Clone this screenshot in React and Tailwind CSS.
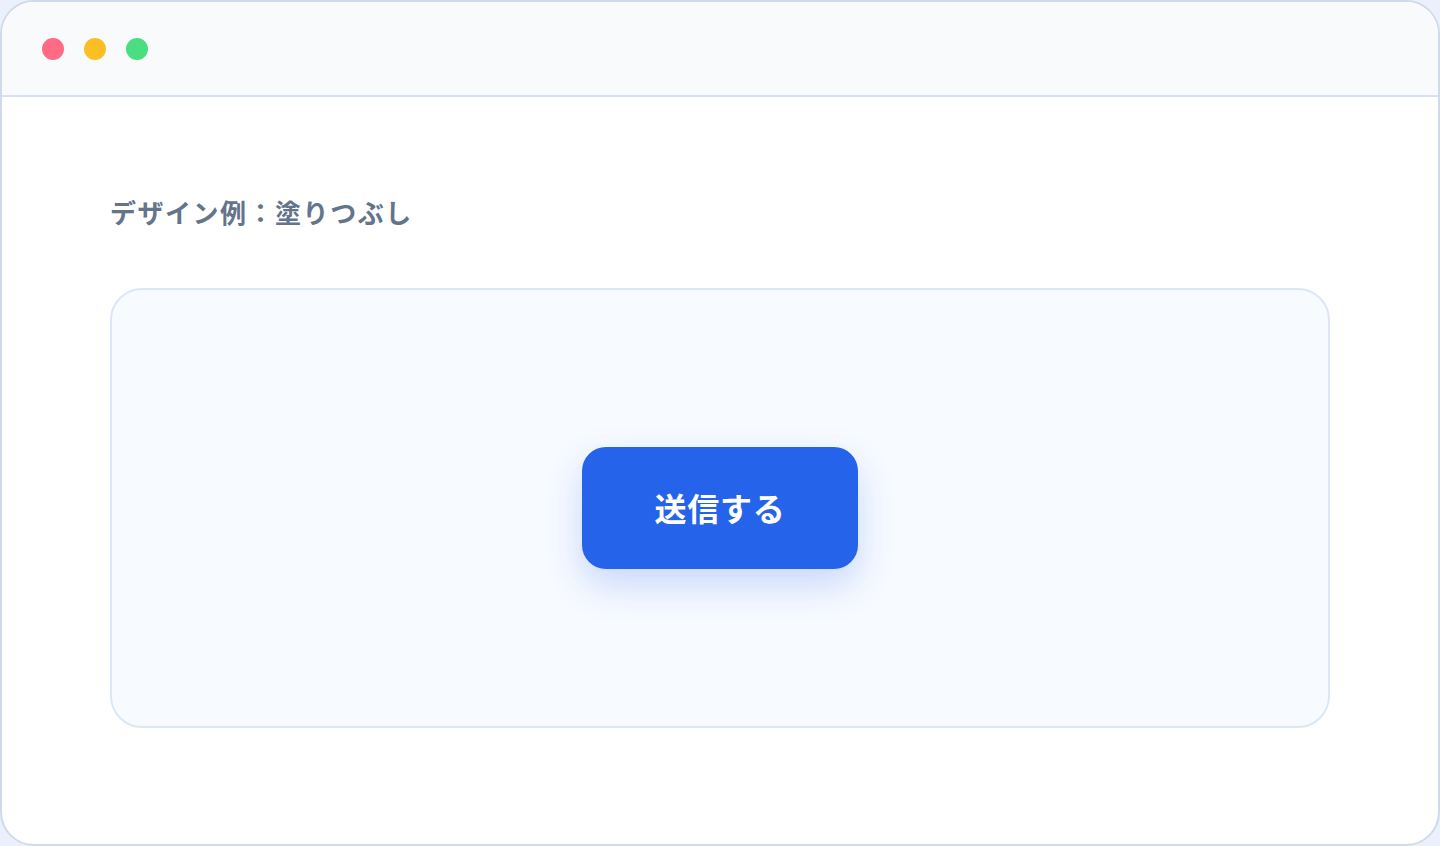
export default function App() {
  return (
    <div className="h-[846px] w-full bg-[#eaf1fd]" style={{ fontFamily: '"Noto Sans CJK JP", "Noto Sans", sans-serif' }}>
      <div className="flex h-full flex-col overflow-hidden rounded-[34px] border-2 border-[#cfdbea] bg-white">
        <div className="flex h-[95px] shrink-0 items-center gap-5 border-b-2 border-[#d6e2f0] bg-[#f8fafc] pl-[40px]">
          <span className="h-[22px] w-[22px] rounded-full bg-[#ff6b84]" />
          <span className="h-[22px] w-[22px] rounded-full bg-[#fbbf24]" />
          <span className="h-[22px] w-[22px] rounded-full bg-[#4ade80]" />
        </div>
        <div className="flex flex-col px-[108px] pt-[97px]">
          <h2 className="text-[26px] leading-[36px] font-bold tracking-[1.5px] text-[#64748b]">デザイン例：塗りつぶし</h2>
          <div className="mt-[58px] flex h-[440px] items-center justify-center rounded-[32px] border-2 border-[#dce7f5] bg-[#f7faff]">
            <button className="h-[122px] w-[276px] rounded-[24px] bg-[#2563eb] pb-[3px] text-[32px] font-bold tracking-wide text-white shadow-[0_16px_36px_rgba(37,99,235,0.22)]">
              送信する
            </button>
          </div>
        </div>
      </div>
    </div>
  );
}
